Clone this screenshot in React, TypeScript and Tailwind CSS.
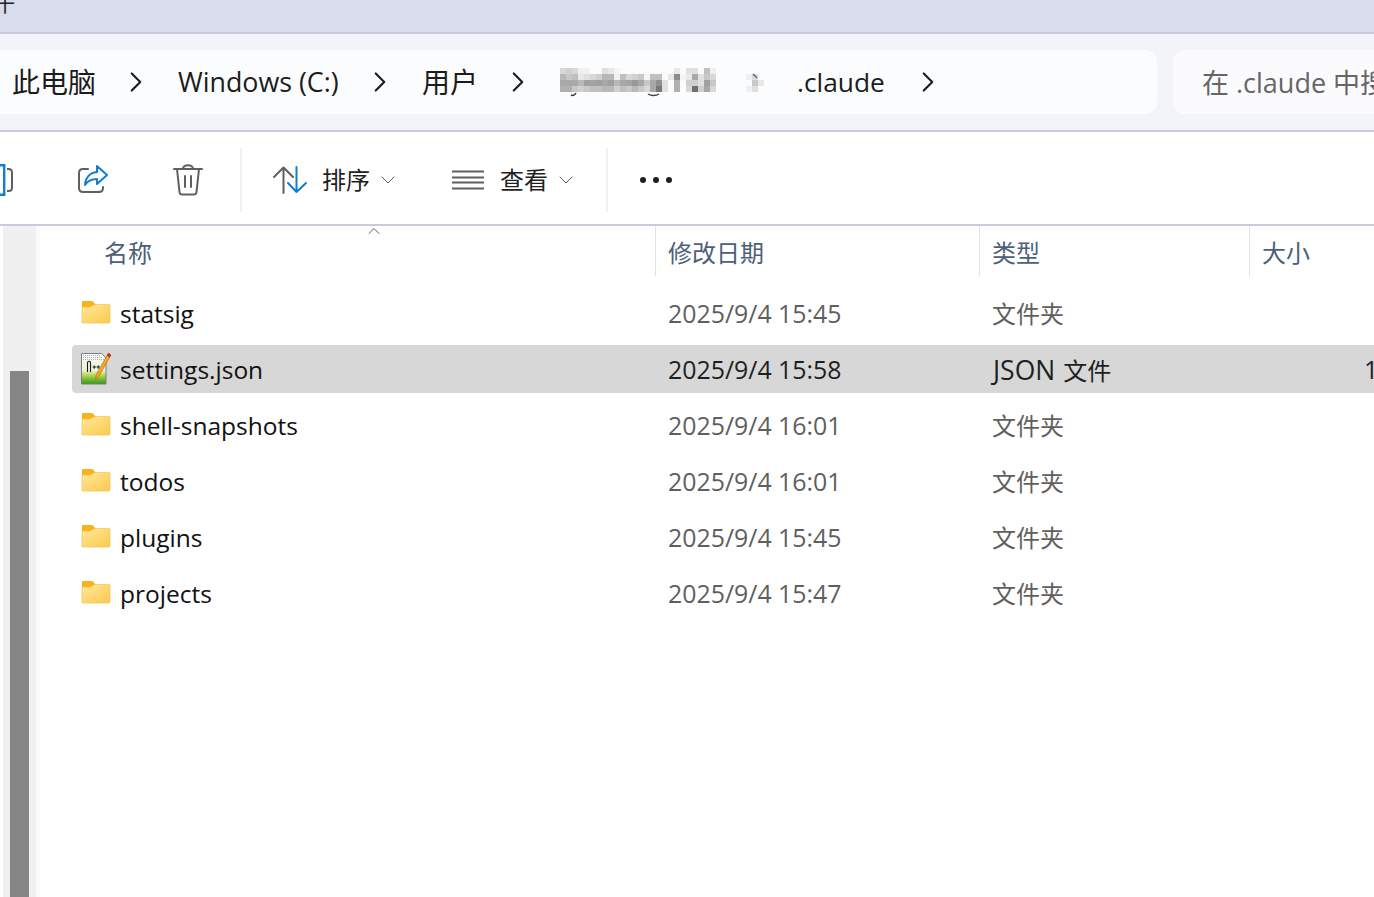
import React from 'react';
import { ChevronRight, ChevronDown, ChevronUp } from 'lucide-react';

const FONT = '"Open Sans", "Noto Sans CJK SC", sans-serif';

interface FileRow {
    name: string;
    date: string;
    type: string;
    selected?: boolean;
}

const rows: FileRow[] = [
    { name: 'statsig', date: '2025/9/4 15:45', type: '文件夹' },
    { name: 'settings.json', date: '2025/9/4 15:58', type: '文件', selected: true },
    { name: 'shell-snapshots', date: '2025/9/4 16:01', type: '文件夹' },
    { name: 'todos', date: '2025/9/4 16:01', type: '文件夹' },
    { name: 'plugins', date: '2025/9/4 15:45', type: '文件夹' },
    { name: 'projects', date: '2025/9/4 15:47', type: '文件夹' },
];

const FolderIcon = () => (
    <svg width="30" height="24" viewBox="0 0 30 24" className="shrink-0">
        <defs>
            <linearGradient id="folderBody" x1="0" y1="0" x2="1" y2="1">
                <stop offset="0" stopColor="#ffe79a" />
                <stop offset="1" stopColor="#fcca4e" />
            </linearGradient>
        </defs>
        <path d="M2 1h8c1.5 0 2.5.6 3.6 2.2L15 5l-6 2H1V2c0-.6.4-1 1-1z" fill="#f9b21c" />
        <path d="M1 7h8.500c1.200 0 2-1.500 3.500-2.500h15c.6 0 1 .4 1 1V22c0 .6-.4 1-1 1H2c-.6 0-1-.4-1-1z" fill="url(#folderBody)" stroke="#f5b942" strokeWidth="0.6" />
    </svg>
);

const NotepadIcon = () => (
    <svg width="32" height="34" viewBox="0 0 32 34" className="shrink-0">
        <defs>
            <linearGradient id="npGreen" x1="0" y1="0" x2="0" y2="1">
                <stop offset="0" stopColor="#f6f8f4" />
                <stop offset="0.55" stopColor="#eef4d8" />
                <stop offset="0.75" stopColor="#a6d040" />
                <stop offset="1" stopColor="#2f9a18" />
            </linearGradient>
        </defs>
        <path d="M.5 1.500h20l4.500 4.500v26H.5z" fill="url(#npGreen)" stroke="#7d7d7d" strokeWidth="1" />
        <path d="M2 3.500h17M2 5.500h19M2 7.500h21" stroke="#9aa3ae" strokeWidth="0.8" strokeDasharray="1 1" />
        <path d="M6.500 20v-9c0-2.400 3-2.400 3 0v9" fill="none" stroke="#1a1a1a" strokeWidth="1.100" />
        <path d="M11.500 15h3.500M13.200 13.300v3.500M15.500 15h3.500M17.200 13.300v3.500" stroke="#222" strokeWidth="1" />
        <path d="M27.500 1l2.500 2-12 21-3.500 3 .7-4.500z" fill="#f3a71f" stroke="#a8680c" strokeWidth="0.6" />
        <path d="M27.500 1l2.500 2-1.500 2.400-2.500-2z" fill="#b32b35" />
    </svg>
);

const ShareIcon = () => (
    <svg width="32" height="32" viewBox="0 0 32 32" fill="none" className="shrink-0">
        <path d="M11 5H6C3.500 5 2 6.500 2 9v15c0 2.500 1.500 4 4 4h16c2.500 0 4-1.500 4-4v-1" stroke="#5f5f5f" strokeWidth="2" strokeLinecap="round" />
        <path d="M20 2l10 9-10 9v-5c-5 0-9 1.500-12 6 .5-7.500 5-12.500 12-13z" stroke="#0f7fd6" strokeWidth="2" strokeLinejoin="round" />
    </svg>
);

const TrashIcon = () => (
    <svg width="30" height="32" viewBox="0 0 30 32" fill="none" className="shrink-0">
        <path d="M1 5h28M10 5c0-5 10-5 10 0M4 5l2.500 23c.1 1.500 1 2.500 2.500 2.500h12c1.500 0 2.400-1 2.500-2.500L26 5M12 12v11M18 12v11" stroke="#5f5f5f" strokeWidth="2" strokeLinecap="round" />
    </svg>
);

const SortIcon = () => (
    <svg width="34" height="28" viewBox="0 0 34 28" fill="none" className="shrink-0">
        <path d="M1 11L10.500 1.500 20 11M10.500 2v25" stroke="#5f5f5f" strokeWidth="2" strokeLinecap="round" strokeLinejoin="round" />
        <path d="M15 17l8.500 9 9.500-9M23.500 26V1" stroke="#0f7fd6" strokeWidth="2" strokeLinecap="round" strokeLinejoin="round" />
    </svg>
);

const LinesIcon = () => (
    <svg width="32" height="20" viewBox="0 0 32 20" fill="none" className="shrink-0">
        <path d="M0 1.500h32M0 7.500h32M0 12.500h32M0 18.500h32" stroke="#5f5f5f" strokeWidth="2" />
    </svg>
);

const CutIcon = () => (
    <svg width="14" height="32" viewBox="0 0 14 32" fill="none" className="shrink-0">
        <path d="M0 1.200h5.500M0 30.800h5.500M4.200 0v32" stroke="#0f7fd6" strokeWidth="2.400" />
        <path d="M7 5h1.500C10.500 5 12 6.500 12 8.500v15c0 2-1.500 3.500-3.500 3.500H7" stroke="#5f5f5f" strokeWidth="2" />
    </svg>
);

// pixelated part of the path, one row of grey levels per line
const mosaicCells = [
    ['d8', 'd0', 'd8', 'f0', 'f0', 'fb', 'fb', 'e0', 'e8', 'f5', 'fb', 'fb', 'fb', 'fb', 'fb', 'fb', 'fb', 'fb', 'fb', 'e8', 'fb', 'e0', 'e0', 'fb', 'c0', 'f0'],
    ['b8', 'c8', 'c0', 'e8', 'e0', 'd8', 'd0', 'b8', 'b8', 'f0', 'c0', 'd8', 'd0', 'c8', 'f5', 'c0', 'c0', 'fb', 'e8', '8c', 'f5', 'e8', 'a8', 'e0', 'c8', 'd8'],
    ['a8', 'a8', 'a8', 'b8', 'a0', 'a4', 'a0', 'a8', 'a0', 'b8', 'a8', 'a4', '98', 'a8', 'c8', 'a8', '90', 'e0', 'fb', 'b0', 'fb', 'd0', 'd0', 'e0', 'a0', 'c8'],
    ['b0', 'b0', 'c8', 'd0', 'c8', 'c0', 'c0', 'b8', 'b8', 'd0', 'c0', 'c8', 'b8', 'c8', 'd8', 'a8', '78', 'e0', 'fb', 'b0', 'fb', 'd8', '70', 'd0', 'a8', 'd8'],
];

const Mosaic = () => (
    <svg width="156" height="30" viewBox="0 0 156 30" className="shrink-0">
        {mosaicCells.flatMap((line, y) =>
            line.map((c, x) => (
                <rect key={`${x}-${y}`} x={x * 6} y={y * 6} width="6" height="6" fill={`#${c}${c}${c}`} />
            ))
        )}
        <path d="M11 27c2 1 4 0 5-2" stroke="#333" strokeWidth="1.500" fill="none" />
        <path d="M88 26c3 2 8 2 11 0" stroke="#444" strokeWidth="1.500" fill="none" />
    </svg>
);

const MosaicArrow = () => (
    <svg width="18" height="24" viewBox="0 0 18 24" className="shrink-0">
        <rect x="0" y="6" width="6" height="6" fill="#f0f0f0" />
        <rect x="0" y="18" width="6" height="6" fill="#f0f0f0" />
        <rect x="6" y="6" width="6" height="6" fill="#dcdcdc" />
        <rect x="6" y="12" width="6" height="6" fill="#c8c8c8" />
        <rect x="6" y="18" width="6" height="6" fill="#e0e0e0" />
        <rect x="12" y="12" width="6" height="6" fill="#e8e8e8" />
        <path d="M7 6l4 4" stroke="#666" strokeWidth="1.500" />
    </svg>
);

const Sep = () => <div className="w-[2px] h-16 bg-[#f0f0f0] shrink-0" />;

const ColDivider = () => <div className="w-[1px] h-[50px] bg-[#e1e1e6] shrink-0" />;

const App: React.FC = () => {
    return (
        <div className="w-[1374px] h-[897px] overflow-hidden flex flex-col bg-white" style={{ fontFamily: FONT }}>
            {/* Title strip */}
            <div className="h-[34px] shrink-0 bg-[#d9dcec] border-b-2 border-[#c8cbdb] overflow-hidden">
                <div className="text-[#222] text-[20px] leading-none -mt-[5px] -ml-[5px]">十</div>
            </div>

            {/* Address band */}
            <div className="h-[98px] shrink-0 bg-[#f3f4f9] border-b-2 border-[#c8cbdb] flex items-start pt-4 gap-4">
                <div className="-ml-[10px] w-[1167px] h-16 rounded-xl bg-[#fbfcfe] flex items-center text-[#1c1c1c] shrink-0">
                    <span className="ml-[22px] text-[28px] leading-none">此电脑</span>
                    <ChevronRight className="ml-[23px]" size={34} strokeWidth={1.500} />
                    <span className="ml-[25px] mt-[1px] text-[26.800px] leading-none w-[161px] whitespace-nowrap">Windows (C:)</span>
                    <ChevronRight className="ml-[24px]" size={34} strokeWidth={1.500} />
                    <span className="ml-[25px] text-[28px] leading-none">用户</span>
                    <ChevronRight className="ml-[23px]" size={34} strokeWidth={1.500} />
                    <div className="ml-[25px] mt-[2px]"><Mosaic /></div>
                    <div className="ml-[30px] mb-[4px]"><MosaicArrow /></div>
                    <span className="ml-[33px] text-[26.300px] leading-none w-[87px]">.claude</span>
                    <ChevronRight className="ml-[27px]" size={34} strokeWidth={1.500} />
                </div>
                <div className="flex-1 h-16 rounded-l-xl bg-[#fbfbfd] flex items-center pt-[2px] pl-[29px] text-[#666] text-[27px] whitespace-nowrap overflow-hidden min-w-0">
                    在 .claude 中搜索
                </div>
            </div>

            {/* Toolbar */}
            <div className="h-[94px] shrink-0 border-b-2 border-[#c8cbdb] pt-1 flex items-center text-[#1f1f1f] text-[24px]">
                <CutIcon />
                <div className="ml-[63px]"><ShareIcon /></div>
                <div className="ml-[64px]"><TrashIcon /></div>
                <div className="ml-[37px]"><Sep /></div>
                <div className="ml-[31px]"><SortIcon /></div>
                <span className="ml-[15px] leading-none">排序</span>
                <ChevronDown className="ml-[6px] text-[#5f5f5f]" size={24} strokeWidth={1} />
                <div className="ml-[52px]"><LinesIcon /></div>
                <span className="ml-[16px] leading-none">查看</span>
                <ChevronDown className="ml-[6px] text-[#5f5f5f]" size={24} strokeWidth={1} />
                <div className="ml-[28px]"><Sep /></div>
                <div className="ml-[32px] flex gap-[7px]">
                    <div className="w-[6px] h-[6px] rounded-full bg-[#1f1f1f]" />
                    <div className="w-[6px] h-[6px] rounded-full bg-[#1f1f1f]" />
                    <div className="w-[6px] h-[6px] rounded-full bg-[#1f1f1f]" />
                </div>
            </div>

            {/* Content */}
            <div className="flex-1 flex min-h-0">
                {/* Scroll strip */}
                <div className="w-[33px] shrink-0 ml-[3px] bg-[#f0f0f0] flex flex-col pt-[145px] pl-[7px]">
                    <div className="w-[19px] flex-1 bg-[#858585]" />
                </div>
                <div className="w-[4px] shrink-0 bg-[#fafafa]" />
                <div className="w-[2px] shrink-0" />

                <div className="flex-1 min-w-0 flex flex-col">
                    {/* Column headers */}
                    <div className="relative h-[50px] shrink-0 flex items-center text-[#4c6079] text-[24px]">
                        <span className="ml-[62px] pt-[3px] w-[551px] leading-none shrink-0">名称</span>
                        <ColDivider />
                        <span className="ml-3 pt-[3px] w-[311px] leading-none shrink-0">修改日期</span>
                        <ColDivider />
                        <span className="ml-3 pt-[3px] w-[257px] leading-none shrink-0">类型</span>
                        <ColDivider />
                        <span className="ml-3 pt-[3px] leading-none shrink-0">大小</span>
                        <ChevronUp className="absolute left-[322px] -top-[5px] text-[#5f5f5f]" size={20} strokeWidth={1.200} />
                    </div>

                    {/* File rows */}
                    <div className="pt-[13px] flex flex-col gap-2">
                        {rows.map(row => (
                            <div
                                key={row.name}
                                className={`h-12 ml-[30px] flex items-center rounded-l-sm ${row.selected ? 'bg-[#d7d7d7]' : ''}`}
                            >
                                <div className="w-[48px] pl-[9px] shrink-0 flex items-center">
                                    {row.selected ? <NotepadIcon /> : <div className="-mt-[2px]"><FolderIcon /></div>}
                                </div>
                                <span className="w-[548px] pt-[2px] text-[24.500px] leading-none text-[#111] shrink-0 whitespace-nowrap">{row.name}</span>
                                <span className={`w-[324px] text-[24.900px] leading-none shrink-0 whitespace-nowrap ${row.selected ? 'text-[#1f1f1f]' : 'text-[#5f5f5f]'}`}>{row.date}</span>
                                <span className={`w-[372px] pt-[2px] text-[24px] leading-none shrink-0 whitespace-nowrap ${row.selected ? 'text-[#1f1f1f]' : 'text-[#5f5f5f]'}`}>
                                    {row.selected && <span className="text-[26.500px] mr-[8px] ml-[1px]">JSON</span>}
                                    {row.type}
                                </span>
                                {row.selected && <span className="text-[25px] leading-none text-[#1f1f1f]">1</span>}
                            </div>
                        ))}
                    </div>
                </div>
            </div>
        </div>
    );
};

export default App;
